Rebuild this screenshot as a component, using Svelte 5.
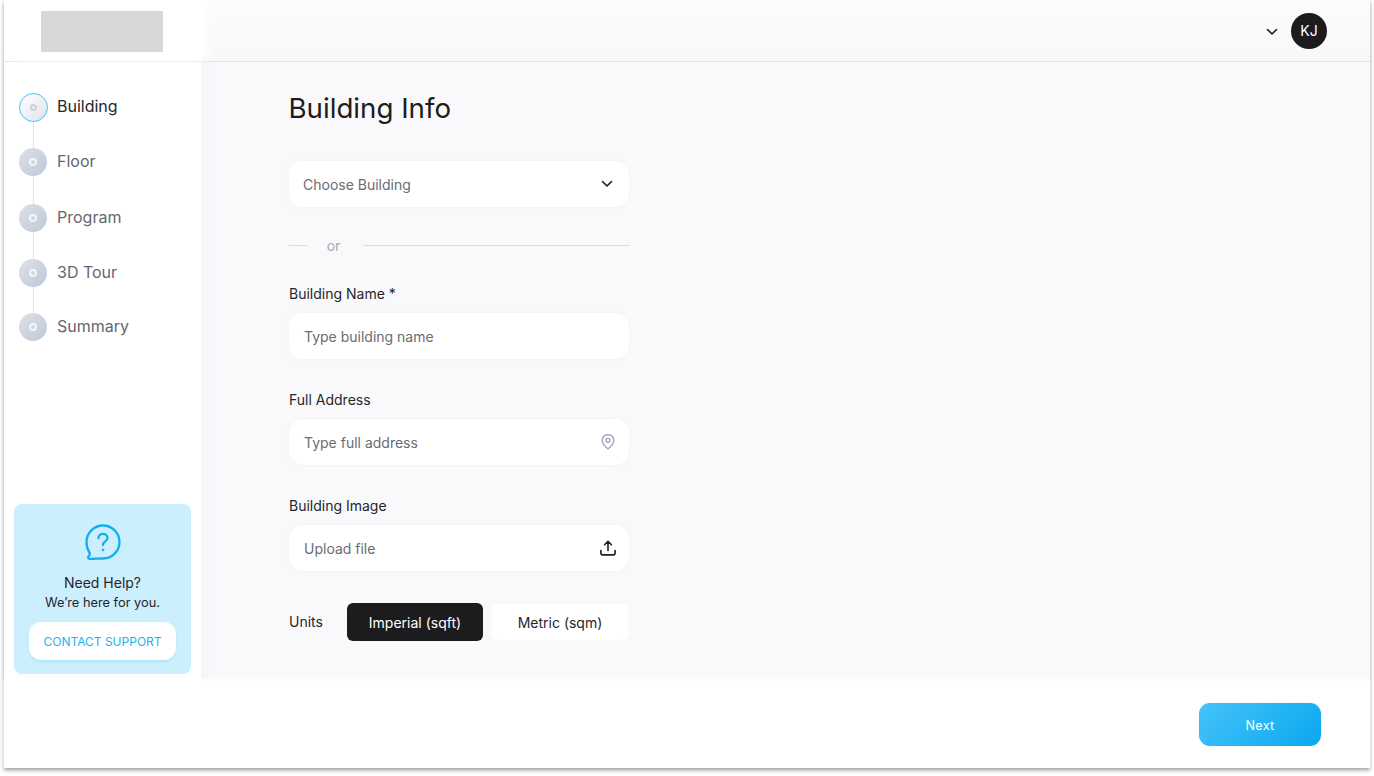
<script>
  const steps = [
    { label: 'Building', active: true },
    { label: 'Floor' },
    { label: 'Program' },
    { label: '3D Tour' },
    { label: 'Summary' }
  ];
</script>

<div class="page">
  <div class="frame">
    <header class="topbar">
      <div class="brand"><div class="logo"></div></div>
      <div class="account">
        <svg class="chev" width="12" height="8" viewBox="0 0 12 8"><path d="M1.5 1.5 6 6l4.5-4.500" /></svg>
        <div class="avatar">KJ</div>
      </div>
    </header>

    <div class="middle">
      <aside class="sidebar">
        <ol class="steps">
          {#each steps as s}
            <li class="step" class:active={s.active}>
              <span class="dot"><span class="hole"></span></span>
              <span class="name">{s.label}</span>
            </li>
          {/each}
        </ol>
        <div class="help">
          <svg class="helpicon" width="36" height="36" viewBox="0 0 36 36">
            <path d="M18 1.500C27.100 1.500 34.500 8.900 34.500 18S27.100 34.500 18 34.500c-3.400 0-9.600.4-13 .4-1.600 0-2.300-1.200-1.500-2.400l1-1.700c.5-.9.400-1.700-.2-2.500C2.500 25.500 1.500 21.900 1.500 18 1.500 8.900 8.900 1.500 18 1.500Z" />
            <path d="M13.500 14.200c0-2.600 2-4.300 4.500-4.300s4.500 1.700 4.500 4.100c0 3.500-4.500 3.400-4.500 7" />
            <circle class="fill" cx="18" cy="26" r="1.300" />
          </svg>
          <p class="need">Need Help?</p>
          <p class="here">We’re here for you.</p>
          <button class="contact">CONTACT SUPPORT</button>
        </div>
      </aside>

      <main class="content">
        <h1>Building Info</h1>

        <div class="box choose">
          <span class="ph">Choose Building</span>
          <svg class="chev" width="12" height="8" viewBox="0 0 12 8"><path d="M1.500 1.500 6 6l4.500-4.500" /></svg>
        </div>

        <div class="or"><span class="l1"></span><span class="ortext">or</span><span class="l2"></span></div>

        <label class="lab first" for="bn">Building Name *</label>
        <div class="box" id="bn"><span class="ph">Type building name</span></div>

        <label class="lab second" for="fa">Full Address</label>
        <div class="box tight" id="fa">
          <span class="ph">Type full address</span>
          <svg class="pin" width="14" height="16" viewBox="0 0 14 16">
            <path d="M7 15C4.800 13 1.200 9.800 1.200 6.400a5.800 5.800 0 0 1 11.600 0C12.800 9.800 9.200 13 7 15Z" />
            <circle cx="7" cy="6.300" r="2" />
          </svg>
        </div>

        <label class="lab second" for="bi">Building Image</label>
        <div class="box tight" id="bi">
          <span class="ph">Upload file</span>
          <svg class="upload" width="16" height="16" viewBox="0 0 16 16">
            <path d="M8 10.500V1.500M4.600 4.800 8 1.300l3.400 3.500" />
            <path d="M.9 10.500v2.600c0 1.100.7 1.800 1.800 1.800h10.600c1.100 0 1.800-.7 1.800-1.800v-2.600" />
          </svg>
        </div>

        <div class="units">
          <span class="ulabel">Units</span>
          <button class="seg on">Imperial (sqft)</button>
          <button class="seg">Metric (sqm)</button>
        </div>
      </main>
    </div>

    <footer class="foot">
      <button class="next">Next</button>
    </footer>
  </div>
</div>

<style>
  :global(body) {
    margin: 0;
    background: #fff;
  }
  .page {
    width: 1374px;
    height: 776px;
    padding-left: 4px;
    box-sizing: border-box;
    overflow: hidden;
    font-family: Inter, "Liberation Sans", sans-serif;
    color: #1d1d20;
  }
  .frame {
    width: 1366px;
    height: 768px;
    display: flex;
    flex-direction: column;
    background: #fff;
    box-shadow: 0 2px 4px rgba(0, 0, 0, 0.42);
  }
  .topbar {
    height: 62px;
    flex: none;
    box-sizing: border-box;
    border-bottom: 1px solid #dfe1e9;
    display: flex;
    align-items: center;
    justify-content: space-between;
    padding-right: 43px;
    background: linear-gradient(180deg, #fcfcfd, #f8f8fa);
  }
  .brand {
    width: 197px;
    height: 61px;
    background: #fff;
    display: flex;
    align-items: center;
    padding: 2px 0 0 37px;
    box-sizing: border-box;
    box-shadow: 6px 0 10px #fff;
  }
  .logo {
    width: 122px;
    height: 41px;
    background: #d8d8d8;
  }
  .account {
    display: flex;
    align-items: center;
    gap: 13px;
  }
  .account .chev {
    margin-top: 3px;
  }
  .chev path {
    fill: none;
    stroke: #1d1d20;
    stroke-width: 1.6;
    stroke-linecap: round;
    stroke-linejoin: round;
  }
  .avatar {
    width: 36px;
    height: 36px;
    border-radius: 50%;
    background: #1c1c1f;
    color: #fff;
    font-size: 14px;
    display: flex;
    align-items: center;
    justify-content: center;
  }
  .middle {
    height: 619px;
    flex: none;
    display: flex;
  }
  .sidebar {
    width: 197px;
    flex: none;
    background: #fff;
    position: relative;
    box-sizing: border-box;
    padding: 31px 10px 0;
    display: flex;
    flex-direction: column;
  }
  .steps {
    list-style: none;
    margin: 0;
    padding: 0 0 0 5px;
    position: relative;
  }
  .steps::before {
    content: "";
    position: absolute;
    left: 19px;
    top: 14px;
    bottom: 14px;
    width: 1px;
    background: #e1e3ea;
  }
  .step {
    height: 28px;
    display: flex;
    align-items: center;
    gap: 10px;
    margin-bottom: 27px;
    position: relative;
    font-size: 16px;
    line-height: 20px;
    color: #66666e;
  }
  .step:nth-child(2),
  .step:nth-child(3) {
    margin-bottom: 27.5px;
  }
  .step:nth-child(4) {
    margin-bottom: 26px;
  }
  .step:last-child {
    margin-bottom: 0;
  }
  .name {
    margin-bottom: 2px;
  }
  .dot {
    width: 28px;
    height: 28px;
    border-radius: 50%;
    flex: none;
    background: linear-gradient(135deg, #dde1e9, #bfc8d6);
    display: flex;
    align-items: center;
    justify-content: center;
    box-sizing: border-box;
  }
  .hole {
    width: 8px;
    height: 8px;
    border-radius: 50%;
    background: #d0d6e0;
    border: 2px solid #f4f5f8;
    box-sizing: border-box;
  }
  .active .dot {
    width: 29px;
    height: 29px;
    margin: 0 -0.5px;
    background: linear-gradient(135deg, #ffffff, #dfe2ea);
    border: 1px solid #46c5f8;
  }
  .active .hole {
    width: 7px;
    height: 7px;
    background: #eef0f4;
    border: 2px solid #cdd1db;
  }
  .active .name {
    color: #26262a;
  }
  .help {
    position: absolute;
    left: 10px;
    top: 442px;
    width: 177px;
    height: 170px;
    border-radius: 8px;
    background: #cceffe;
    box-sizing: border-box;
    padding-top: 20px;
    display: flex;
    flex-direction: column;
    align-items: center;
  }
  .helpicon path {
    fill: none;
    stroke: #12aef2;
    stroke-width: 2.3;
    stroke-linecap: round;
    stroke-linejoin: round;
  }
  .helpicon .fill {
    fill: #12aef2;
  }
  .need {
    margin: 13px 0 0;
    font-size: 14px;
    line-height: 20px;
    color: #26262a;
  }
  .here {
    margin: 0;
    font-size: 12.8px;
    line-height: 19px;
    color: #26262a;
  }
  .contact {
    margin-top: 10px;
    width: 147px;
    height: 38px;
    border: none;
    border-radius: 12px;
    background: #fff;
    color: #1bb2f3;
    font: 12px Inter, sans-serif;
    box-shadow: 0 2px 2px rgba(27, 178, 243, 0.15);
  }
  .content {
    flex: 1;
    background: linear-gradient(90deg, #f4f6fa, #f9f9fb 14px);
    padding-left: 88px;
    box-sizing: border-box;
  }
  h1 {
    margin: 0 0 0 -0.5px;
    padding-top: 28px;
    font-size: 27.7px;
    line-height: 36px;
    font-weight: 400;
    color: #1d1d20;
  }
  .box {
    width: 340px;
    height: 46px;
    background: #fff;
    border-radius: 14px;
    box-sizing: border-box;
    padding: 0 13px 0 15px;
    display: flex;
    align-items: center;
    justify-content: space-between;
    font-size: 14px;
    box-shadow: 0 0 3px rgba(225, 228, 238, 0.35);
  }
  .choose {
    margin-top: 35px;
    padding-left: 14px;
    padding-right: 16px;
  }
  .ph {
    color: #6b6b74;
  }
  .or {
    width: 341px;
    height: 20px;
    margin-top: 28px;
    display: flex;
    align-items: center;
    font-size: 14px;
  }
  .l1,
  .l2 {
    height: 1px;
    background: #dadce3;
  }
  .l1 {
    width: 18px;
  }
  .l2 {
    flex: 1;
  }
  .ortext {
    width: 56px;
    box-sizing: border-box;
    padding-right: 3px;
    text-align: center;
    color: #a9a9af;
  }
  .lab {
    display: block;
    height: 20px;
    line-height: 20px;
    font-size: 14px;
    color: #26262a;
  }
  .first {
    margin-top: 29px;
  }
  .first + .box {
    margin-top: 9px;
  }
  .second {
    margin-top: 31px;
  }
  .second + .box {
    margin-top: 9px;
  }
  #fa {
    padding-right: 14px;
  }
  .pin path,
  .pin circle {
    fill: none;
    stroke: #9ba6b4;
    stroke-width: 1.3;
  }
  .upload path {
    fill: none;
    stroke: #1d1d20;
    stroke-width: 1.6;
    stroke-linecap: round;
    stroke-linejoin: round;
  }
  .units {
    margin-top: 32px;
    display: flex;
    align-items: center;
    height: 38px;
    font-size: 14px;
    color: #26262a;
  }
  .ulabel {
    width: 58px;
    margin-bottom: 1px;
  }
  .seg {
    width: 136px;
    height: 38px;
    border: none;
    border-radius: 6px;
    background: #1c1c1f;
    color: #fff;
    font: 14px Inter, sans-serif;
    padding: 0;
  }
  .seg:not(.on) {
    margin-left: 9px;
    height: 36px;
    background: #fff;
    color: #26262a;
  }
  .foot {
    flex: 1;
    position: relative;
    background: #fff;
    display: flex;
    justify-content: flex-end;
    align-items: flex-start;
    padding: 22px 49px 0 0;
    box-shadow: 0 -2px 3px #fff;
  }
  .next {
    width: 122px;
    height: 43px;
    border: none;
    border-radius: 11px;
    background: linear-gradient(135deg, #45c3fb, #0aa8ee);
    color: #fff;
    font: 12.6px Inter, sans-serif;
    letter-spacing: 0.3px;
    padding: 2px 0 0;
    box-shadow: 0 0 2px rgba(70, 197, 248, 0.2);
  }
</style>
